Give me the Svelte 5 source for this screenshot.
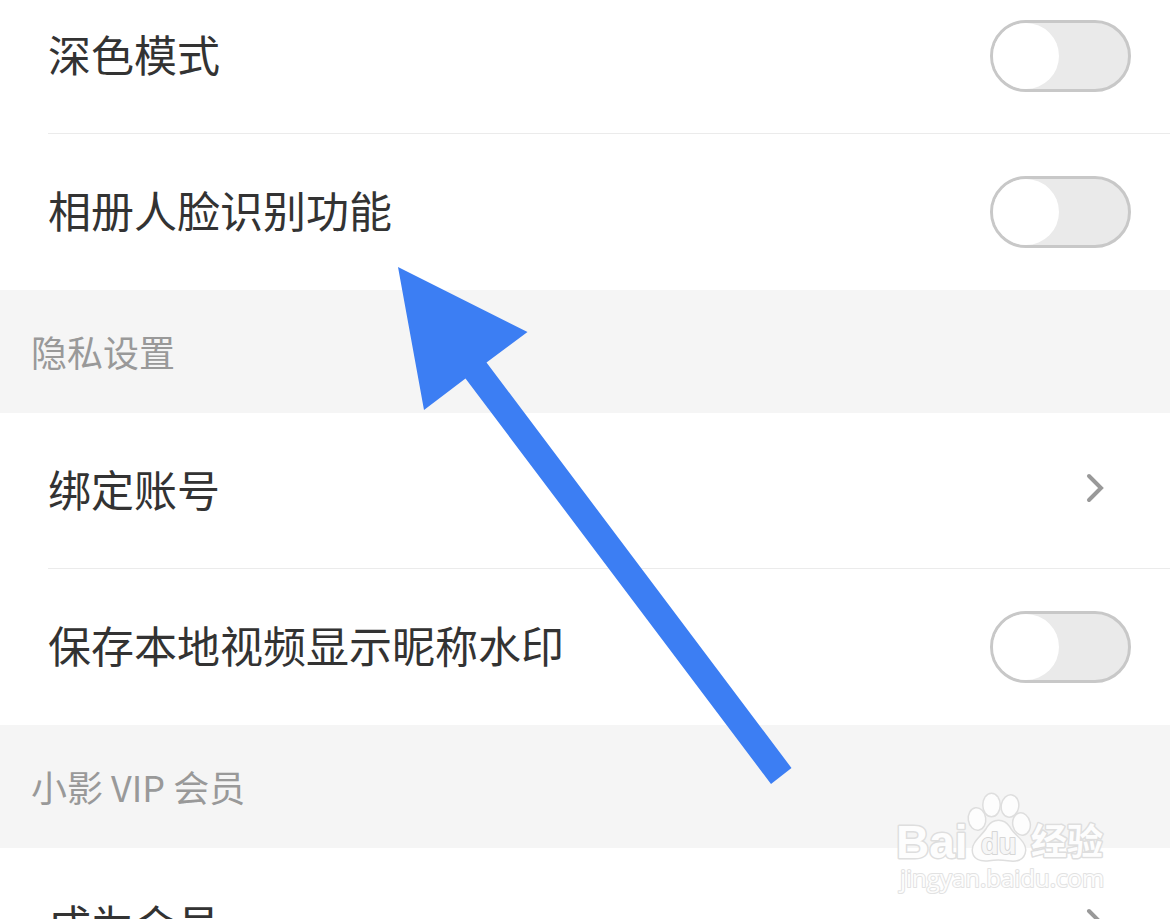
<script>
  let groups = $state([
    {
      title: '',
      rows: [
        { id: 'dark', label: '深色模式', kind: 'switch', on: false },
        { id: 'face', label: '相册人脸识别功能', kind: 'switch', on: false }
      ]
    },
    {
      title: '隐私设置',
      rows: [
        { id: 'bind', label: '绑定账号', kind: 'link' },
        { id: 'mark', label: '保存本地视频显示昵称水印', kind: 'switch', on: false }
      ]
    },
    {
      title: '小影 VIP 会员',
      rows: [{ id: 'vip', label: '成为会员', kind: 'link' }]
    }
  ]);
</script>

<main class="page">
  {#each groups as group}
    <section>
      {#if group.title}
        <h2>{group.title}</h2>
      {/if}
      <ul>
        {#each group.rows as row (row.id)}
          <li>
            {#if row.kind === 'switch'}
              <label class="row" for={row.id}>
                <span>{row.label}</span>
                <input id={row.id} type="checkbox" role="switch" bind:checked={row.on} />
              </label>
            {:else}
              <a class="row" href={'#' + row.id}>
                <span>{row.label}</span>
                <svg class="chevron" viewBox="0 0 20 36" aria-hidden="true">
                  <path d="M4 3 L16 15 L4 27" />
                </svg>
              </a>
            {/if}
          </li>
        {/each}
      </ul>
    </section>
  {/each}

  <svg class="arrow" viewBox="0 0 394 518" aria-hidden="true">
    <path d="M0 0 L129.500 65 L88.500 95.500 L393.500 501 L373 517 L67.500 111.500 L26 143 Z" />
  </svg>

  <svg class="watermark" viewBox="0 0 220 110" aria-hidden="true">
    <g class="mark">
      <text class="brand" x="6" y="68" font-size="46">Bai</text>
      <ellipse cx="87" cy="29" rx="8" ry="10.500" transform="rotate(-8 87 29)" />
      <ellipse cx="101.500" cy="15" rx="8" ry="11" />
      <ellipse cx="120" cy="16" rx="8" ry="10.500" transform="rotate(10 120 16)" />
      <ellipse cx="131.500" cy="34" rx="8" ry="10.500" transform="rotate(-12 131.500 34)" />
      <path d="M98 37 C103 29 114 29 119 37 C123 45 135 51 135 60 C134 71 125 71 118 70 C111 69 105 69 99 70 C91 71 83 69 83 60 C83 51 94 45 98 37 Z" />
      <text class="du" x="91" y="64" font-size="29">du</text>
      <text class="cjk" x="141" y="65" font-size="36">经验</text>
      <text class="site" x="10" y="97" font-size="24">jingyan.baidu.com</text>
    </g>
  </svg>
</main>

<style>
  :global(body) {
    margin: 0;
    background: #fff;
  }

  .page {
    position: relative;
    height: 100vh;
    overflow: hidden;
    background: #fff;
    color: #333;
    font-family: "Noto Sans CJK SC", "Noto Sans", sans-serif;
  }

  section:first-child {
    margin-top: -22px;
  }

  h2 {
    margin: 0;
    padding: 0 31px;
    background: #f5f5f5;
    color: #999;
    font-size: 36px;
    font-weight: 400;
    line-height: 123px;
  }

  ul {
    margin: 0;
    padding: 0 0 1px 48px;
    list-style: none;
  }

  li + li {
    border-top: 1px solid #ebebeb;
  }

  .row {
    display: flex;
    align-items: center;
    justify-content: space-between;
    min-height: 155px;
    padding-right: 39px;
    color: inherit;
    font-size: 43px;
    line-height: 64px;
    text-decoration: none;
  }

  .row span {
    padding-bottom: 6px;
  }

  input {
    appearance: none;
    box-sizing: border-box;
    flex: none;
    width: 141px;
    height: 72px;
    margin: 0;
    border: 3px solid #c8c8c8;
    border-radius: 36px;
    background: #eaeaea;
  }

  input::before {
    content: "";
    display: block;
    width: 66px;
    height: 66px;
    border-radius: 50%;
    background: #fff;
  }

  input:checked {
    background: #3c7ef3;
  }

  input:checked::before {
    margin-left: auto;
  }

  .chevron {
    width: 20px;
    height: 36px;
    margin-right: 26px;
    fill: none;
    stroke: #999;
    stroke-width: 4;
    stroke-linecap: round;
  }

  .arrow {
    position: absolute;
    top: 267px;
    left: 398px;
    width: 394px;
    height: 518px;
    fill: #3c7ef3;
    pointer-events: none;
  }

  .watermark {
    position: absolute;
    top: 790px;
    left: 890px;
    width: 220px;
    height: 110px;
    pointer-events: none;
  }

  .mark {
    fill: #fdfdfd;
    stroke: #dedede;
    stroke-width: 3;
    stroke-linejoin: round;
    paint-order: stroke;
    font-family: "Liberation Sans", sans-serif;
  }

  .brand,
  .cjk {
    font-weight: 700;
  }

  .du {
    font-weight: 700;
    fill: #f6f6f6;
    stroke: #d6d6d6;
    stroke-width: 2;
  }

  .cjk {
    font-family: "Noto Sans CJK SC", sans-serif;
  }

  .site {
    font-family: "Open Sans", sans-serif;
    stroke: #e2e2e2;
    stroke-width: 2;
  }
</style>
